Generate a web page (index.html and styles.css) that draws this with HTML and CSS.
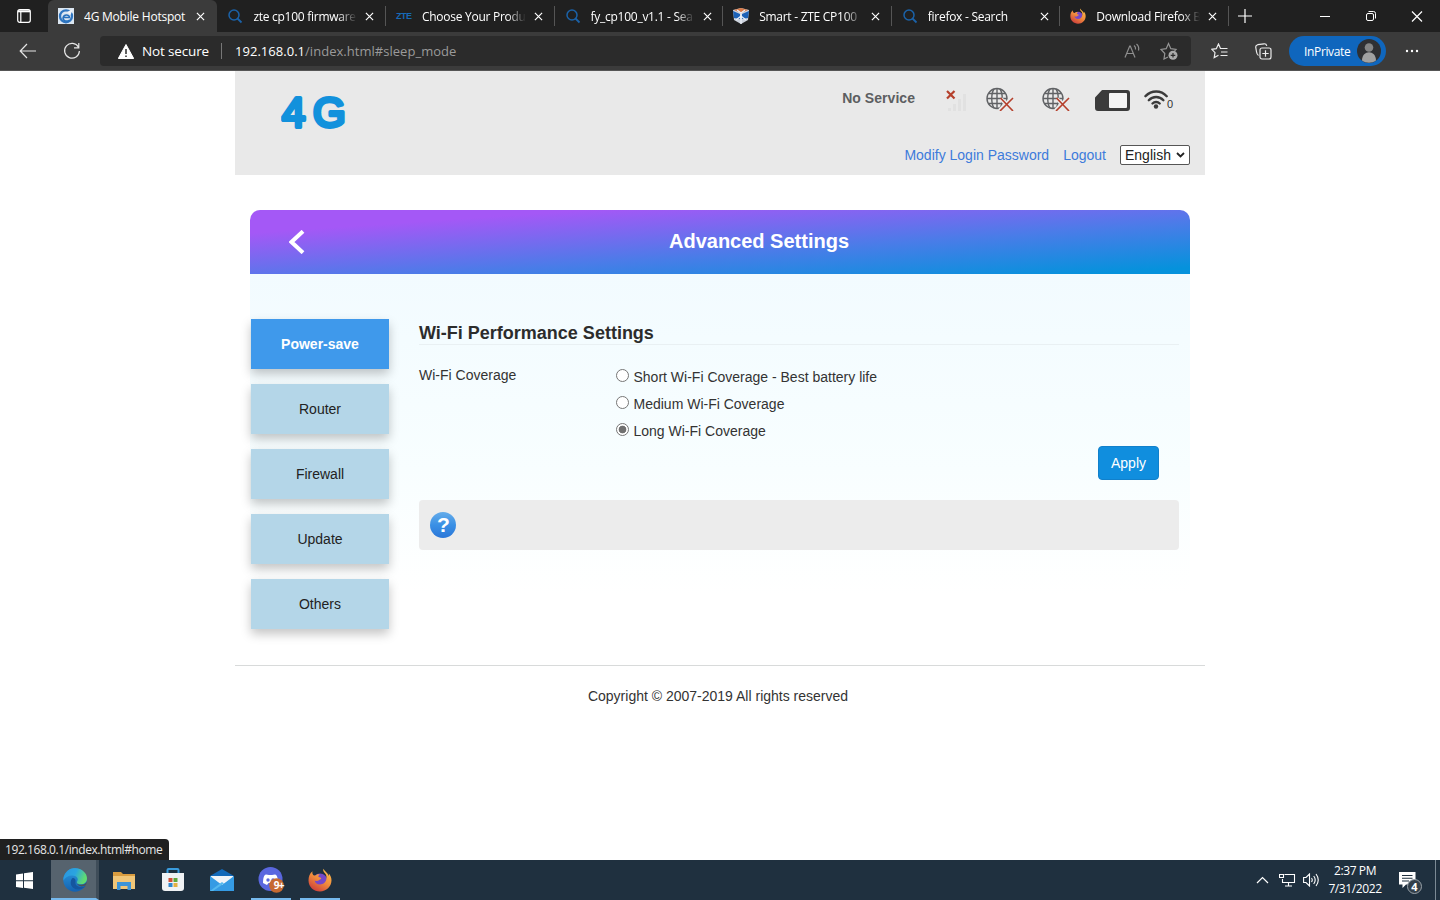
FILE: index.html
```html
<!DOCTYPE html>
<html lang="en">
<head>
<meta charset="utf-8">
<title>4G Mobile Hotspot</title>
<link rel="stylesheet" href="styles.css">
</head>
<body>
<svg class="defs" width="0" height="0">
  <defs>
    <linearGradient id="edgeBlue" x1="0" y1="0" x2="0" y2="1"><stop offset="0" stop-color="#2b9be0"/><stop offset="1" stop-color="#1461b0"/></linearGradient>
    <linearGradient id="edgeGreen" x1="0" y1="0" x2="1" y2="0.3"><stop offset="0" stop-color="#2a95e0"/><stop offset="0.55" stop-color="#2aa5e0"/><stop offset="1" stop-color="#5fdc72"/></linearGradient>
    <linearGradient id="foxFill" x1="0.8" y1="0" x2="0.2" y2="1"><stop offset="0" stop-color="#ffc04a"/><stop offset="0.5" stop-color="#f08a3c"/><stop offset="1" stop-color="#c9383c"/></linearGradient>
    <symbol id="close" viewBox="0 0 10 10"><path d="M1 1l8 8M9 1l-8 8" stroke="#fff" stroke-width="1.3" fill="none"/></symbol>
    <symbol id="search" viewBox="0 0 16 16"><circle cx="7" cy="7" r="5" fill="none" stroke="#1b62a8" stroke-width="1.5"/><path d="M10.500 10.500l4 4" stroke="#1b62a8" stroke-width="1.8"/></symbol>
    <symbol id="firefox" viewBox="0 0 24 24">
      <circle cx="12" cy="13" r="7.500" fill="#7548c8"/>
      <path d="M15.500 .8c-.6 1.700-.1 2.800 1.200 4.200 1.300 1.400 1.900 3 1.800 5-.2 4-3 6.400-6.500 6.400-3.300 0-5.200-2-5.300-4 1.500 1 3.600.8 4.500-.4.700-.9 2-.8 2-1.500-.2-1-2-.7-2.600-1.400-.6-.9.100-2 1.200-2.900-2.200-.2-3.200.3-4.300 1.300-1 .1-1.600-.1-2.300-.6C4.300 6 4.200 4.500 4.500 3.300 1.700 5.200.5 8.800.5 12.500.5 19 5.700 23.500 12 23.500S23.500 18.700 23.500 12.300c0-3-1.200-5.300-2.800-6.900.2 1 .3 1.700.2 2.500C19.600 4.800 16.400 3.300 15.500.8z" fill="url(#foxFill)"/>
    </symbol>
    <symbol id="globe" viewBox="0 0 28 24">
      <g fill="none" stroke="#606265" stroke-width="1.400"><circle cx="11" cy="11.500" r="10"/><path d="M11 1.500v20M1 11.500h20M3 6.500h16M3 16.500h16M8 2C5 6.500 5 16.500 8 21M14 2c3 4.500 3 14.500 0 19"/></g>
      <path d="M15 12l11 11M26 11L14 23" stroke="#e9e9e9" stroke-width="4"/>
      <path d="M14.500 11L27 24M27 11L14 24" stroke="#b5402c" stroke-width="1.600"/>
    </symbol>
  </defs>
</svg>

<div class="tabs">
  <div class="tab-menu"><svg width="14" height="14" viewBox="0 0 14 14"><rect x=".7" y=".7" width="12.600" height="12.600" rx="2" fill="none" stroke="#fff" stroke-width="1.200"/><path d="M1 2.300h12" stroke="#fff" stroke-width="2"/><path d="M3.800 3v10.500" stroke="#fff" stroke-width="1.200"/></svg></div>
  <div class="tab active">
    <svg class="fav" viewBox="0 0 16 16"><rect width="16" height="16" fill="#dbe6f1"/><circle cx="8" cy="8.300" r="6" fill="none" stroke="#2f75c0" stroke-width="2.300"/><path d="M5 9.500h6.500c0-3.500-6-3.500-6.500.5 0 3 4 4 6.500 2" fill="none" stroke="#2670bd" stroke-width="1.500"/><path d="M9 4l6-3-2.500 6z" fill="#eef3fa"/></svg>
    <span class="title">4G Mobile Hotspot</span><svg class="x"><use href="#close"/></svg>
  </div>
  <div class="tab"><svg class="fav"><use href="#search"/></svg><span class="title">zte cp100 firmware</span><svg class="x"><use href="#close"/></svg></div>
  <div class="tab"><span class="fav zte">ZTE</span><span class="title">Choose Your Produ</span><svg class="x"><use href="#close"/></svg></div>
  <div class="tab"><svg class="fav"><use href="#search"/></svg><span class="title">fy_cp100_v1.1 - Sea</span><svg class="x"><use href="#close"/></svg></div>
  <div class="tab">
    <svg class="fav" viewBox="0 0 16 16"><path d="M0 2l8-2 8 2-1 10-7 4-7-4z" fill="#ccd2dc"/><path d="M1 2l7-2 7 2-7 3z" fill="#d97845"/><path d="M0 3l7 3v5L1 10zM16 3L9 6v5l6-1z" fill="#1d62b7"/><path d="M4 2l4 3 4-3M8 6v10M3 12l5-4 5 4" stroke="#eef3fa" stroke-width="1.200" fill="none"/></svg>
    <span class="title">Smart - ZTE CP100</span><svg class="x"><use href="#close"/></svg>
  </div>
  <div class="tab"><svg class="fav"><use href="#search"/></svg><span class="title">firefox - Search</span><svg class="x"><use href="#close"/></svg></div>
  <div class="tab"><svg class="fav"><use href="#firefox"/></svg><span class="title">Download Firefox B</span><svg class="x"><use href="#close"/></svg></div>
  <svg class="plus" width="14" height="14" viewBox="0 0 14 14"><path d="M7 0v14M0 7h14" stroke="#fff" stroke-width="1.200"/></svg>
  <div class="win">
    <svg width="46" height="32" viewBox="0 0 46 32"><path d="M18 16.500h10" stroke="#fff"/></svg>
    <svg width="46" height="32" viewBox="0 0 46 32"><g fill="none" stroke="#fff"><rect x="18.500" y="13.500" width="7" height="7" rx="1.500"/><path d="M20.500 11.500h5a2 2 0 0 1 2 2v5"/></g></svg>
    <svg width="46" height="32" viewBox="0 0 46 32"><path d="M18 11.500l10 10M28 11.500l-10 10" stroke="#fff" stroke-width="1.200"/></svg>
  </div>
</div>

<div class="toolbar">
  <svg class="back" width="18" height="16" viewBox="0 0 18 16"><path d="M17 8H1.500M8 1L1.200 8 8 15" fill="none" stroke="#e6e6e6" stroke-width="1.200"/></svg>
  <svg class="reload" width="18" height="18" viewBox="0 0 18 18"><path d="M15.500 5.200A7.400 7.400 0 1 0 16.400 9M15.800 1v4.800H11" fill="none" stroke="#e6e6e6" stroke-width="1.200"/></svg>
  <div class="address">
    <svg width="16" height="15" viewBox="0 0 16 15"><path d="M8 .5L15.700 14.500H.3z" fill="#fff" stroke="#fff" stroke-linejoin="round"/><path d="M8 5v5M8 11.500v1.600" stroke="#2b2b2b" stroke-width="1.500"/></svg>
    <span class="insecure">Not secure</span>
    <span class="url"><b>192.168.0.1</b>/index.html#sleep_mode</span>
    <svg class="read" width="17" height="16" viewBox="0 0 17 16"><path d="M1 14.500L5.700 3h.6L11 14.500M2.800 10.500h6.400M10 2.500q2 1.500 1.500 4M12.500 1q3 2.500 2 6.500" fill="none" stroke="#8e8e8e" stroke-width="1.200"/></svg>
    <svg width="18" height="18" viewBox="0 0 18 18"><path d="M8 15l-4 2 .8-5.500L1 7.500l5.200-.8L8.500 1.500l2.300 5.200 5.200.8-1.500 1.500" fill="none" stroke="#959595" stroke-width="1.200"/><circle cx="13" cy="13.300" r="4.500" fill="#aaa"/><path d="M13 11v4.600M10.700 13.300h4.600" stroke="#2b2b2b" stroke-width="1.200"/></svg>
  </div>
  <svg class="favs" width="17" height="16" viewBox="0 0 17 16"><path d="M9.500 5.500L7.500 1 5.300 5.700.8 6.300l3.200 3.300-.8 5 4.300-2.300M9 5.500h7.500M10 9h6.500M9.500 12.500h7" fill="none" stroke="#ececec" stroke-width="1.200"/></svg>
  <svg class="collections" width="17" height="17" viewBox="0 0 17 17"><g fill="none" stroke="#ececec" stroke-width="1.200"><path d="M3.500 12.500C1.500 11.500 1.800 10 1.200 7L.7 4c0-1.500 1-2 2-2.300L9 .8c1.600-.2 2.400.4 2.800 2"/><rect x="5" y="5" width="11" height="11" rx="2"/><path d="M10.500 7.300v6.400M7.300 10.500h6.400"/></g></svg>
  <div class="inprivate"><span>InPrivate</span><svg width="24" height="24" viewBox="0 0 24 24"><circle cx="12" cy="12" r="12" fill="#2f3033"/><circle cx="12" cy="8.500" r="4.300" fill="#858585"/><path d="M5 21.500c0-11 14-11 14 0-4 3-10 3-14 0z" fill="#a1a1a1"/></svg></div>
  <svg class="dots" width="14" height="4" viewBox="0 0 14 4"><g fill="#fff"><circle cx="2" cy="2" r="1.200"/><circle cx="7" cy="2" r="1.200"/><circle cx="12" cy="2" r="1.200"/></g></svg>
</div>

<main class="page">
  <header class="top">
    <svg class="logo" width="80" height="70" viewBox="0 0 80 70"><text x="1" y="56">4</text><text x="32" y="56">G</text></svg>
    <div class="right">
      <div class="status">
        <b>No Service</b>
        <svg class="signal" width="20" height="22" viewBox="0 0 20 22"><g fill="#e1e1e1"><rect x="2" y="18" width="3" height="3"/><rect x="7" y="14" width="3" height="7"/><rect x="12" y="9" width="3" height="12"/><rect x="17" y="4" width="3" height="17"/></g><path d="M1 1l7.500 7.500M8.500 1L1 8.500" stroke="#b5402c" stroke-width="2.200"/></svg>
        <svg class="g1" width="28" height="24"><use href="#globe"/></svg>
        <svg class="g2" width="28" height="24"><use href="#globe"/></svg>
        <svg class="sim" width="35" height="21" viewBox="0 0 35 21"><path d="M7.500 1H32a2 2 0 0 1 2 2v15a2 2 0 0 1-2 2H3a2 2 0 0 1-2-2V8z" fill="#3b3b3b" stroke="#3b3b3b" stroke-width="2" stroke-linejoin="round"/><rect x="14" y="3" width="18" height="15" rx="1" fill="#f4f4f4"/></svg>
        <svg class="wifi" width="24" height="19" viewBox="0 0 24 19"><g fill="none" stroke="#3b3b3b" stroke-width="2.400" stroke-linecap="round"><path d="M1.500 6.200C7.500-.1 17-.1 22.700 6.200"/><path d="M4.800 10.200c4-4.300 10.600-4.300 14.600 0"/><path d="M8.500 13.500c2-2 5.200-2 7.200 0"/></g><circle cx="12" cy="16.500" r="2.200" fill="#3b3b3b"/></svg>
        <span class="count">0</span>
      </div>
      <div class="links"><a>Modify Login Password</a><a>Logout</a><span class="lang">English<svg width="9" height="6" viewBox="0 0 9 6"><path d="M1 1l3.500 3.500L8 1" fill="none" stroke="#222" stroke-width="1.800"/></svg></span></div>
    </div>
  </header>

  <section class="panel">
    <div class="panel-head">
      <svg width="16" height="24" viewBox="0 0 16 24"><path d="M14 1.300L2.500 12 14 22.700" fill="none" stroke="#fff" stroke-width="4"/></svg>
      <h1>Advanced Settings</h1>
    </div>
    <div class="panel-body">
      <nav><a class="on">Power-save</a><a>Router</a><a>Firewall</a><a>Update</a><a>Others</a></nav>
      <div class="content">
        <h2>Wi-Fi Performance Settings</h2>
        <div class="row">
          <span class="label">Wi-Fi Coverage</span>
          <div class="options">
            <label><i class="radio"></i>Short Wi-Fi Coverage - Best battery life</label>
            <label><i class="radio"></i>Medium Wi-Fi Coverage</label>
            <label><i class="radio checked"></i>Long Wi-Fi Coverage</label>
          </div>
        </div>
        <button class="apply">Apply</button>
        <div class="help"><span>?</span></div>
      </div>
    </div>
  </section>
  <footer>Copyright © 2007-2019 All rights reserved</footer>
  <div class="hover-url">192.168.0.1/index.html#home</div>
</main>

<div class="taskbar">
  <div class="task start"><svg width="17" height="17" viewBox="0 0 17 17"><path d="M0 2.500l7-1v6.700H0zM8 1.300L17 0v8.200H8zM0 9.200h7V16l-7-1zM8 9.200h9V17l-9-1.300z" fill="#fff"/></svg></div>
  <div class="task current"><svg width="24" height="24" viewBox="0 0 24 24"><circle cx="12" cy="12" r="11.700" fill="url(#edgeBlue)"/><path d="M1 8C4 1 9 .2 12 .2c7 0 12 5 12 10 0 4-3 6-6 6s-5-1-4-2.500c2-3 0-6.200-5-6.200-4 0-7 2-8.500 5C.3 11 .4 9.500 1 8z" fill="url(#edgeGreen)"/><path d="M9 10.500c-3 4-1 11 6.500 11 3 0 5.500-1.500 7-3.500-4 2-11 1-10-4 .5-2-1-5-3.500-3.500z" fill="#15569f"/><path d="M13.800 13.600c-1 2 1 3.300 4.200 3.200 3 0 5-1.300 6-3.300L23 17c-4 3-10 1-9.200-3.400z" fill="#4a5158"/></svg></div>
  <div class="task"><svg width="22" height="19" viewBox="0 0 22 19"><path d="M0 1h8l2 2h12v15H0z" fill="#d99c3f"/><path d="M0 5h22v13H0z" fill="#f0c678"/><path d="M4 19v-8h14v8h-3.500v-4h-7v4z" fill="#3b94d8"/></svg></div>
  <div class="task"><svg width="24" height="24" viewBox="0 0 24 24"><path d="M6.500 6V2q0-1 1-1h9q1 0 1 1v4" fill="none" stroke="#399bdd" stroke-width="2"/><path d="M1 5h22v15q0 3-3 3H4q-3 0-3-3z" fill="#f0f2f4"/><path d="M7.500 10h4v4h-4z" fill="#d34f36"/><path d="M12.500 10h4v4h-4z" fill="#60a83c"/><path d="M7.500 15h4v4h-4z" fill="#2f87cf"/><path d="M12.500 15h4v4h-4z" fill="#e5b041"/></svg></div>
  <div class="task"><svg width="24" height="22" viewBox="0 0 24 22"><path d="M0 7l12-7 12 7v15H0z" fill="#1269b9"/><path d="M1 7h22v9H1z" fill="#f0f4f8"/><path d="M0 7l12 9L24 7v15H0z" fill="#359be4"/><path d="M0 22l12-9 2 1.500L3 22z" fill="#55b9ef"/></svg></div>
  <div class="task open"><svg width="26" height="26" viewBox="0 0 26 26"><circle cx="12.500" cy="12" r="12" fill="#5a67df"/><path d="M5 16c0-5 1-8 3-8.500l3 .5h3l3-.5c2 .5 3 3.500 3 8.500l-4 2-1.500-2h-4L9 18z" fill="#fff"/><circle cx="10" cy="13" r="1.700" fill="#5a67df"/><circle cx="15" cy="13" r="1.700" fill="#5a67df"/><circle cx="18.500" cy="18.500" r="7.300" fill="#c76a30"/></svg><span class="nine">9+</span></div>
  <div class="task open"><svg width="24" height="24"><use href="#firefox"/></svg></div>
  <div class="tray">
    <svg class="chev" width="13" height="8" viewBox="0 0 13 8"><path d="M1 7l5.500-5.500L12 7" fill="none" stroke="#fff" stroke-width="1.200"/></svg>
    <svg class="net" width="17" height="14" viewBox="0 0 17 14"><path d="M5.500 1.500h10v8H3.500V6M9.500 10v3M6 13h7M.5 1.500h4v3h-4z" fill="none" stroke="#fff" stroke-width="1.100"/></svg>
    <svg class="vol" width="17" height="14" viewBox="0 0 17 14"><path d="M.6 4.500H3L6.500 1v12L3 9.500H.6zM8.500 5q1.500 2 0 4M10.700 3q3 4 0 8M13 1q4.500 6 0 12" fill="none" stroke="#fff" stroke-width="1.100"/></svg>
    <div class="clock"><span>2:37 PM</span><span>7/31/2022</span></div>
    <div class="notes"><svg width="17" height="16" viewBox="0 0 17 16"><path d="M0 0h16.500v12.500H7L3.500 16v-3.500H0z" fill="#fff"/><path d="M3 3.500h10.500M3 6.300h10.500M3 9h7" stroke="#1f303f" stroke-width="1.100"/></svg><span>4</span></div>
  </div>
</div>
</body>
</html>
```

FILE: styles.css
```css
* { box-sizing: border-box; }
html, body { height: 100%; }
body {
  margin: 0;
  display: flex;
  flex-direction: column;
  overflow: hidden;
  background: #fff;
  font: 14px "Liberation Sans", Arial, sans-serif;
  color: #333;
}
svg { display: block; flex: none; }
.defs { position: absolute; }

/* Tab strip */
.tabs {
  height: 32px;
  flex: none;
  display: flex;
  align-items: center;
  background: #202020;
  color: #fff;
  font: 12px "Open Sans", "Noto Sans", sans-serif;
}
.tab-menu { width: 48px; display: flex; justify-content: center; }
.tab {
  width: 168.600px;
  height: 32px;
  padding: 0 11px 0 10px;
  display: flex;
  align-items: center;
  flex: none;
  background: linear-gradient(#555, #555) right 6px / 1px 20px no-repeat;
}
.tab.active { width: 169.400px; background: #3b3b3b; border-radius: 6px 6px 0 0; }
.fav { width: 16px; height: 16px; margin-right: 10px; flex: none; }
.zte { font: bold 9px/16px "Liberation Sans", sans-serif; color: #1769b5; letter-spacing: -.5px; }
.title {
  width: 104px;
  margin-right: 8px;
  overflow: hidden;
  white-space: nowrap;
  letter-spacing: -.27px;
  -webkit-mask-image: linear-gradient(90deg, #000 82%, transparent 100%);
}
.active .title { -webkit-mask-image: none; letter-spacing: -.22px; }
.x { width: 9px; height: 9px; }
.plus { margin-left: 9px; }
.win { display: flex; margin-left: auto; }

/* Toolbar */
.toolbar {
  height: 39px;
  flex: none;
  display: flex;
  align-items: center;
  background: #3b3b3b;
  border-bottom: 1px solid #555;
  color: #fff;
  font: 14px "Open Sans", "Noto Sans", sans-serif;
}
.back { margin-left: 19px; }
.reload { margin-left: 26px; }
.address {
  width: 1091px;
  height: 30px;
  margin-left: 19px;
  padding: 0 13px 0 18px;
  display: flex;
  align-items: center;
  background: #2b2b2b;
  border-radius: 4px;
}
.insecure {
  width: 80px;
  margin-left: 8px;
  line-height: 16px;
  border-right: 1px solid #777;
  font-size: 13.500px;
  letter-spacing: -.15px;
  white-space: nowrap;
}
.url { margin-left: 13px; color: #9a9a9a; font-size: 13px; letter-spacing: .03px; }
.url b { color: #fff; font-weight: 400; }
.read { margin-left: auto; margin-right: 19px; }
.favs { margin-left: 20px; }
.collections { margin-left: 27px; }
.inprivate {
  width: 97px;
  height: 30px;
  margin-left: 17px;
  padding: 0 5px 0 15px;
  display: flex;
  align-items: center;
  justify-content: space-between;
  background: #0f66bd;
  border-radius: 15px;
  font-size: 12px;
  letter-spacing: -.35px;
}
.dots { margin-left: 19px; }

/* Router admin page */
.page { position: relative; flex: 1; display: flex; flex-direction: column; align-items: center; min-height: 0; }
.top {
  width: 970px;
  height: 104px;
  flex: none;
  display: flex;
  justify-content: space-between;
  padding: 0 15px 0 46px;
  background: #e9e9e9;
}
.logo text {
  font: 42px "Liberation Sans", Arial, sans-serif;
  fill: #1291dc;
  stroke: #1291dc;
  stroke-width: 4px;
  stroke-linejoin: round;
}
.right { display: flex; flex-direction: column; }
.status { display: flex; align-items: flex-start; height: 74px; padding: 16px 16px 0 0; justify-content: flex-end; }
.status b { margin-top: 3px; color: #5c5e61; line-height: 16px; letter-spacing: .05px; }
.signal { margin: 3px 0 0 31px; }
.g1 { margin-left: 20px; }
.g2 { margin-left: 28px; }
.sim { margin: 3px 0 0 25px; }
.wifi { margin: 3px 0 0 14px; }
.count { margin: 11px 0 0 -1px; width: 7px; font-size: 11px; line-height: 13px; }
.links { display: flex; align-items: center; justify-content: flex-end; height: 20px; }
.links a { margin-right: 14px; color: #3d7bdb; white-space: nowrap; }
.lang {
  width: 70px;
  height: 20px;
  padding: 0 4px;
  display: flex;
  align-items: center;
  justify-content: space-between;
  border: 1px solid #555;
  border-radius: 2px;
  background: #fff;
  color: #222;
}
.panel { width: 940px; margin-top: 35px; }
.panel-head {
  height: 64px;
  padding-left: 39px;
  display: flex;
  align-items: center;
  border-radius: 10px 10px 0 0;
  background: linear-gradient(to bottom right, #a458f6 18%, #4a7ce8 60%, #0592dc 95%);
}
.panel-head h1 { flex: 1; margin: 0 16px 3px 39px; text-align: center; font-size: 20px; line-height: 24px; color: #fff; }
.panel-body {
  height: 391px;
  padding: 45px 11px 0 1px;
  display: flex;
  align-items: flex-start;
  background: linear-gradient(#f2fbff 0, #f8feff 50%, #fff 82%);
}
nav { width: 138px; display: flex; flex-direction: column; gap: 15px; }
nav a {
  height: 50px;
  line-height: 50px;
  text-align: center;
  background: #b4d6e8;
  color: #222;
  box-shadow: 0 5px 10px rgba(0, 0, 0, .23);
}
nav .on { background: #3f99eb; color: #fff; font-weight: 700; }
.content { flex: 1; margin-left: 30px; display: flex; flex-direction: column; }
.content h2 { height: 26px; margin: 0; font-size: 18px; line-height: 29px; color: #2c2c2c; border-bottom: 1px solid #e9f0f3; }
.row { display: flex; padding-top: 18px; }
.label { width: 197px; line-height: 24px; }
.options { padding-top: 1px; }
.options label { display: flex; height: 27px; line-height: 27px; white-space: nowrap; }
.radio { width: 13px; height: 13px; margin: 5px 4.500px 0 0; border: 1px solid #767676; border-radius: 50%; background: #fff; }
.radio.checked { background: radial-gradient(circle, #707070 0 3.500px, #fff 4.200px); }
.apply {
  width: 61px;
  height: 34px;
  margin: 1px 20px 0 0;
  align-self: flex-end;
  border: 1px solid #1180cb;
  border-radius: 4px;
  background: #108ede;
  color: #fff;
  font: inherit;
  padding: 0;
}
.help { height: 50px; margin-top: 20px; padding: 12px 11.400px; background: #ececec; border-radius: 4px; }
.help span {
  display: block;
  width: 26px;
  height: 26px;
  border-radius: 50%;
  background: linear-gradient(#65acea, #3a90e5 50%, #2b76d8);
  color: #fff;
  text-align: center;
  font: bold 21px/26px "Liberation Sans", sans-serif;
}
footer { width: 970px; padding: 21px 4px 0 0; text-align: center; line-height: 18px; border-top: 1px solid #d8dada; }
.hover-url {
  position: absolute;
  left: 0;
  bottom: 0;
  width: 169px;
  height: 21px;
  padding-left: 5px;
  background: #202020;
  border-top-right-radius: 4px;
  color: #e6e6e6;
  font: 12px/21px "Open Sans", "Noto Sans", sans-serif;
  letter-spacing: -.42px;
  white-space: nowrap;
}

/* Taskbar */
.taskbar { height: 40px; flex: none; display: flex; background: #1f303f; color: #fff; }
.task { position: relative; width: 40px; height: 40px; margin-right: 9px; display: flex; align-items: center; justify-content: center; }
.start { width: 48px; margin-right: 3px; }
.current { width: 48px; margin-right: 5px; background: #56636e; border-bottom: 2px solid #76b9ed; padding-top: 2px; border-right: 3px solid #3f4d59; }
.current svg { margin-left: 2px; }
.open { border-bottom: 2px solid #76b9ed; padding-top: 2px; }
.nine { position: absolute; right: 7px; top: 18px; font: bold 10px/14px "Open Sans", sans-serif; letter-spacing: -.6px; }
.tray { margin-left: auto; display: flex; align-items: center; border-right: 1px solid #7b8994; margin-right: 4px; }
.net { margin-left: 10px; }
.vol { margin-left: 7px; }
.clock { width: 70px; display: flex; flex-direction: column; align-items: center; font: 12px/18px "Open Sans", "Noto Sans", sans-serif; letter-spacing: -.4px; }
.notes { position: relative; width: 36px; margin-left: 9px; }
.notes span {
  position: absolute;
  left: 8px;
  top: 7px;
  width: 15px;
  height: 15px;
  border: 1px solid #99a2a9;
  border-radius: 50%;
  background: #333f4a;
  text-align: center;
  font: bold 11px/13px "Open Sans", sans-serif;
}
```
